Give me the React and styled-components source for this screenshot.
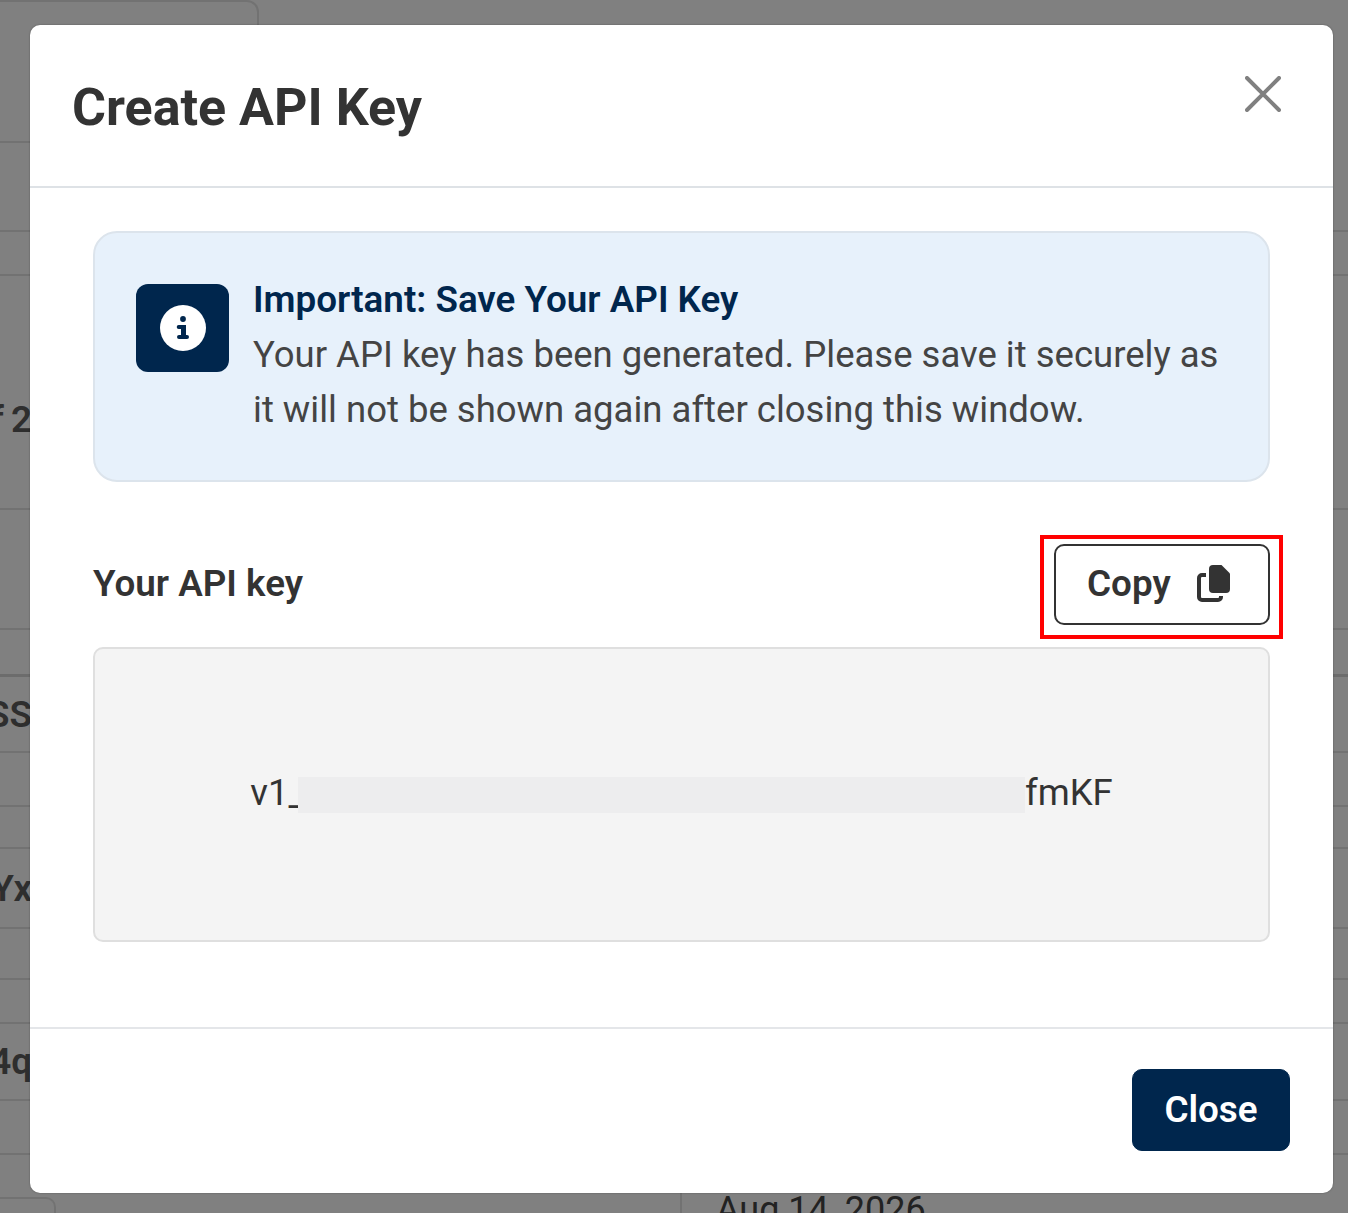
import styled, { createGlobalStyle } from "styled-components";

const GlobalStyle = createGlobalStyle`
    html, body {
        margin: 0;
        padding: 0;
        background: #808080;
    }
    * {
        box-sizing: border-box;
    }
`;

const S = {
    Page: styled.div`
        position: relative;
        width: 1348px;
        height: 1213px;
        overflow: hidden;
        background: #808080;
        font-family: Roboto, "Liberation Sans", sans-serif;
    `,
    TopTab: styled.div`
        width: 259px;
        height: 143px;
        border-top: 2px solid #727272;
        border-right: 2px solid #727272;
        border-bottom: 2px solid #727272;
        border-top-right-radius: 12px;
    `,
    Row: styled.div`
        display: flex;
        align-items: center;
        height: ${(props) => props.$height}px;
        padding-top: ${(props) => props.$offset || 0}px;
        border-bottom: ${(props) => props.$thick ? "3px solid #6c6c6c" : "2px solid #727272"};
    `,
    RowClip: styled.div`
        display: flex;
        justify-content: flex-end;
        width: 32px;
        overflow: hidden;
        white-space: pre;
        word-spacing: -2px;
        font-size: 36.8px;
        font-weight: 600;
        color: #2e2e2e;
    `,
    BottomRow: styled.div`
        display: flex;
        height: 58px;
    `,
    BottomLeft: styled.div`
        display: flex;
        align-items: flex-end;
        width: 682px;
        border-right: 2px solid #727272;
    `,
    SmallTab: styled.div`
        width: 56px;
        height: 16px;
        border-top: 2px solid #727272;
        border-right: 2px solid #727272;
        border-top-right-radius: 10px;
    `,
    DateCell: styled.div`
        padding: 34px 0 0 34px;
        font-size: 36px;
        line-height: 42px;
        color: #222;
    `,
    Modal: styled.div`
        position: absolute;
        left: 30px;
        top: 25px;
        width: 1303px;
        height: 1168px;
        display: flex;
        flex-direction: column;
        background: #fff;
        border-radius: 10px;
        box-shadow: 0 0 2px rgba(0, 0, 0, 0.35);
    `,
    Header: styled.div`
        display: flex;
        justify-content: space-between;
        height: 163px;
        padding: 51px 52px 0 42px;
        border-bottom: 2px solid #dee2e6;
    `,
    Title: styled.h2`
        margin: 0;
        font-size: 52px;
        line-height: 64px;
        font-weight: 700;
        color: #333;
    `,
    CloseIcon: styled.button`
        display: flex;
        width: 36px;
        height: 36px;
        padding: 0;
        border: none;
        background: none;
        color: #808080;
    `,
    Body: styled.div`
        flex: 1;
        display: flex;
        flex-direction: column;
        padding: 43px 63px 0;
    `,
    Notice: styled.div`
        display: flex;
        gap: 24px;
        height: 251px;
        padding: 40px 41px 0;
        background: #e7f1fb;
        border: 2px solid #dce4ec;
        border-radius: 24px;
    `,
    NoticeIcon: styled.div`
        flex: none;
        display: flex;
        align-items: center;
        justify-content: center;
        width: 93px;
        height: 88px;
        margin-top: 11px;
        background: #00264d;
        border-radius: 12px;
    `,
    NoticeHeading: styled.div`
        font-size: 36.8px;
        line-height: 54px;
        font-weight: 600;
        color: #00264d;
    `,
    NoticeText: styled.div`
        font-size: 36.5px;
        line-height: 55px;
        color: #444;
    `,
    KeyBar: styled.div`
        display: flex;
        align-items: center;
        justify-content: space-between;
        margin-top: 62px;
    `,
    KeyLabel: styled.div`
        padding-bottom: 2px;
        font-size: 36.8px;
        font-weight: 600;
        color: #333;
    `,
    CopyButton: styled.button`
        position: relative;
        display: flex;
        align-items: center;
        justify-content: space-between;
        width: 216px;
        height: 81px;
        padding: 0 38px 2px 31px;
        background: #fff;
        border: 2px solid #333;
        border-radius: 10px;
        font-family: inherit;
        font-size: 36.8px;
        font-weight: 600;
        color: #333;

        &::after {
            content: "";
            position: absolute;
            left: -16px;
            top: -11px;
            right: -15px;
            bottom: -16px;
            border: 4px solid #f00;
        }
    `,
    KeyBox: styled.div`
        display: flex;
        align-items: center;
        justify-content: center;
        height: 295px;
        margin-top: 22px;
        padding-bottom: 5px;
        background: #f4f4f4;
        border: 2px solid #dfdfdf;
        border-radius: 10px;
        font-size: 36.5px;
        color: #333;
    `,
    Redacted: styled.span`
        display: inline-block;
        width: 727px;
        height: 36px;
        margin-left: -7px;
        vertical-align: -8px;
        background: #ededee;
    `,
    Footer: styled.div`
        display: flex;
        justify-content: flex-end;
        height: 166px;
        padding: 40px 43px 0 0;
        border-top: 2px solid #e4e6e9;
    `,
    CloseButton: styled.button`
        width: 158px;
        height: 82px;
        padding: 0 0 2px;
        background: #00264d;
        border: 1px solid #00264d;
        border-radius: 10px;
        font-family: inherit;
        font-size: 36.8px;
        font-weight: 600;
        color: #fff;
    `,
};

const rows = [
    { height: 89 },
    { height: 44 },
    { height: 234, text: "of 2", offset: 54 },
    { height: 120 },
    { height: 47, thick: true },
    { height: 76, text: "SS" },
    { height: 54 },
    { height: 42 },
    { height: 80, text: "Yx" },
    { height: 51 },
    { height: 44 },
    { height: 77, text: "4q" },
    { height: 54 },
];

function CrossIcon() {
    return (
        <svg width="36" height="36" viewBox="0 0 36 36" fill="none" stroke="currentColor" strokeWidth="4" strokeLinecap="round">
            <path d="M2 2 34 34M34 2 2 34" />
        </svg>
    );
}

function InfoIcon() {
    return (
        <svg width="46" height="46" viewBox="0 0 46 46">
            <circle cx="23" cy="23" r="23" fill="#fff" />
            <circle cx="23" cy="14" r="2.9" fill="#00264d" />
            <path d="M18.7 20H26v10h1a2 2 0 0 1 0 4h-8a2 2 0 0 1 0-4h2v-6h-2.3a2 2 0 0 1 0-4z" fill="#00264d" />
        </svg>
    );
}

function CopyIcon() {
    return (
        <svg width="33" height="37" viewBox="0 0 33 37">
            <path d="M16 0h8.5L33 8.5V24a4 4 0 0 1-4 4H16a4 4 0 0 1-4-4V4a4 4 0 0 1 4-4z" fill="#333" />
            <path d="M9 10H5a3 3 0 0 0-3 3v19a3 3 0 0 0 3 3h16a3 3 0 0 0 3-3v-1" fill="none" stroke="#333" strokeWidth="4" />
        </svg>
    );
}

export default function App() {
    return (
        <S.Page>
            <GlobalStyle />
            <S.TopTab />
            {rows.map((row, i) => (
                <S.Row key={i} $height={row.height} $offset={row.offset} $thick={row.thick}>
                    {row.text && <S.RowClip>{row.text}</S.RowClip>}
                </S.Row>
            ))}
            <S.BottomRow>
                <S.BottomLeft>
                    <S.SmallTab />
                </S.BottomLeft>
                <S.DateCell>Aug 14, 2026</S.DateCell>
            </S.BottomRow>

            <S.Modal>
                <S.Header>
                    <S.Title>Create API Key</S.Title>
                    <S.CloseIcon aria-label="Close"><CrossIcon /></S.CloseIcon>
                </S.Header>
                <S.Body>
                    <S.Notice>
                        <S.NoticeIcon><InfoIcon /></S.NoticeIcon>
                        <div>
                            <S.NoticeHeading>Important: Save Your API Key</S.NoticeHeading>
                            <S.NoticeText>
                                Your API key has been generated. Please save it securely as<br />
                                it will not be shown again after closing this window.
                            </S.NoticeText>
                        </div>
                    </S.Notice>
                    <S.KeyBar>
                        <S.KeyLabel>Your API key</S.KeyLabel>
                        <S.CopyButton>Copy <CopyIcon /></S.CopyButton>
                    </S.KeyBar>
                    <S.KeyBox>
                        <span>v1_<S.Redacted />fmKF</span>
                    </S.KeyBox>
                </S.Body>
                <S.Footer>
                    <S.CloseButton>Close</S.CloseButton>
                </S.Footer>
            </S.Modal>
        </S.Page>
    );
}
